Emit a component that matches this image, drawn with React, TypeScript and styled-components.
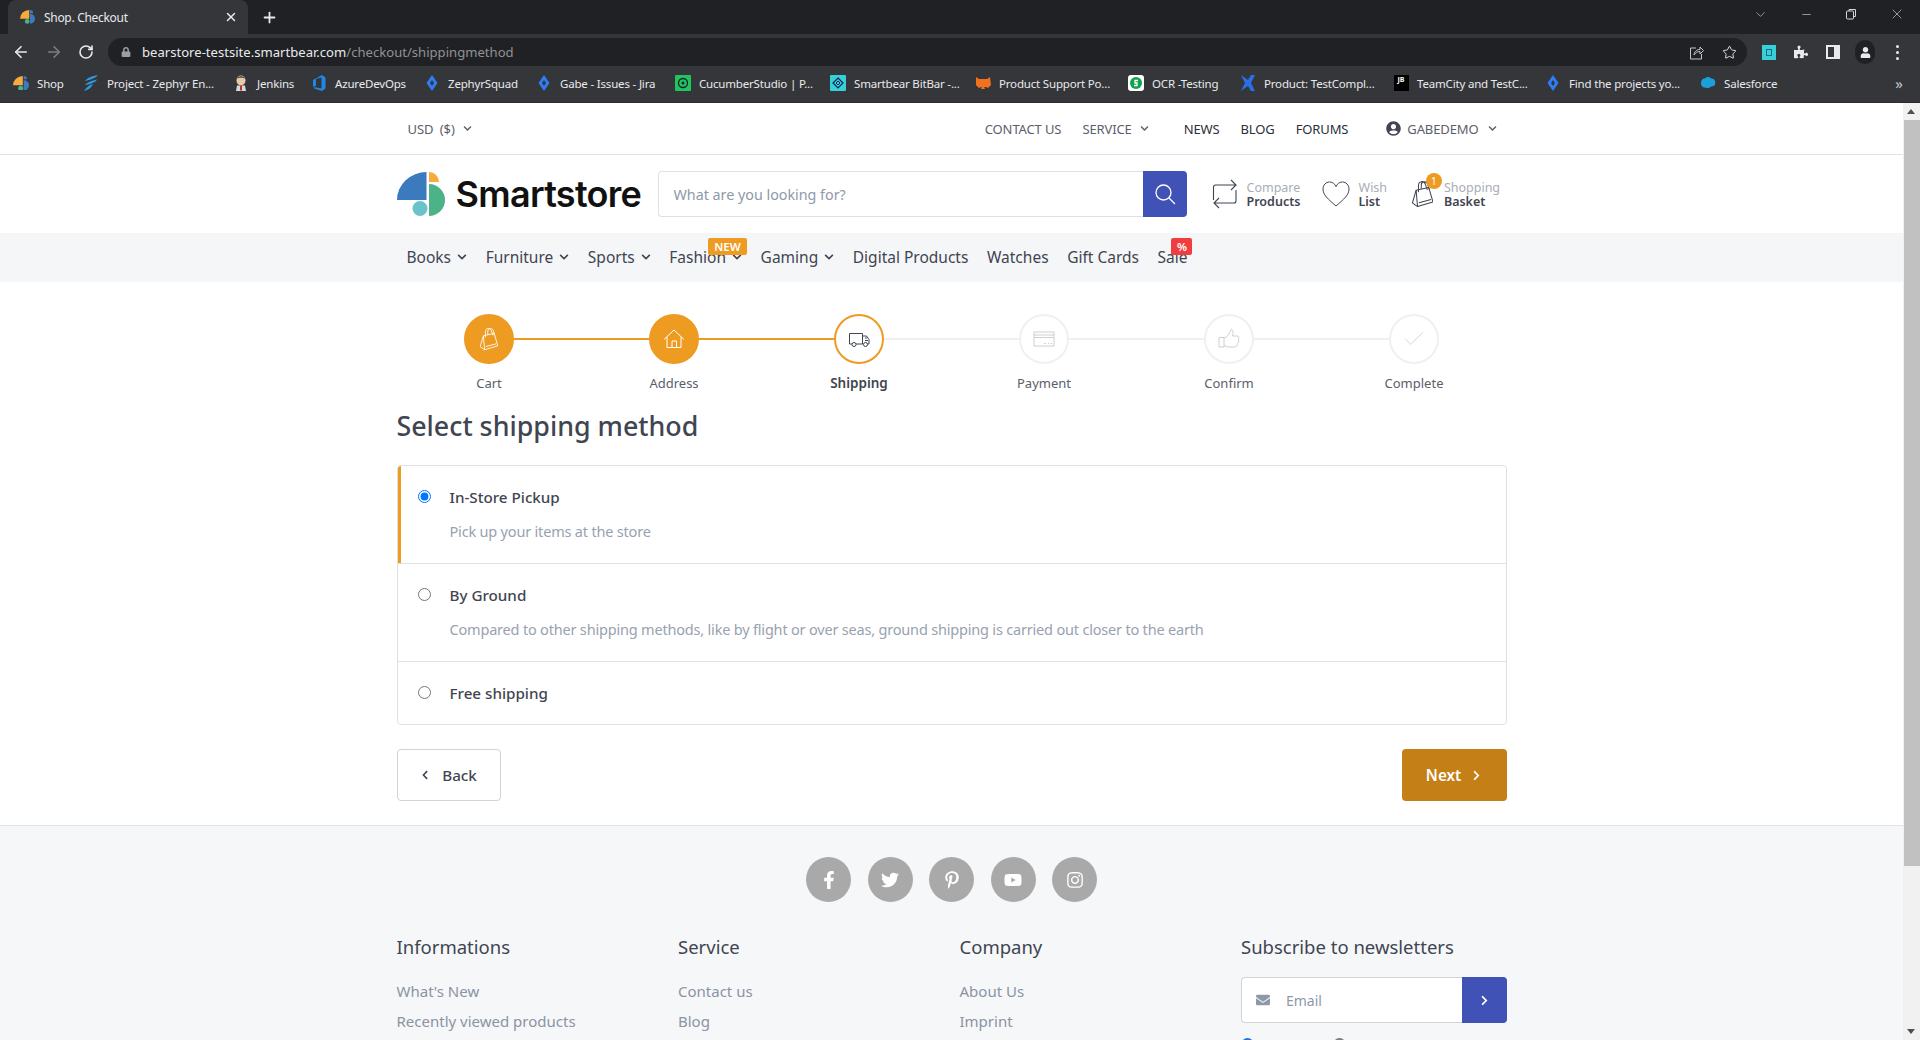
import React from 'react';
import styled, { createGlobalStyle } from 'styled-components';
import { ArrowLeft, ArrowRight, ChevronDown, Check, Minus, Plus, RotateCw, Star, X } from 'lucide-react';
import {
  FaChevronDown,
  FaChevronLeft,
  FaChevronRight,
  FaEnvelope,
  FaFacebookF,
  FaInstagram,
  FaLock,
  FaPinterestP,
  FaPuzzlePiece,
  FaTwitter,
  FaUser,
  FaUserCircle,
  FaYoutube
} from 'react-icons/fa';

const UI_FONT = `'Noto Sans', 'Open Sans', sans-serif`;
const ORANGE = '#ee9b22';
const INDIGO = '#4052b5';
const BORDER = '#dee2e6';

const GlobalStyle = createGlobalStyle`
  html, body {
    margin: 0;
    padding: 0;
    height: 1040px;
    overflow: hidden;
    background: #fff;
  }
  * {
    box-sizing: border-box;
  }
`;

type Palette = { big: string; small: string; half: string; dot: string };

const LOGO_COLORS: Palette = { big: '#3a7abd', small: '#f6ab3c', half: '#4cb388', dot: '#6ac3cb' };
const FAVICON_COLORS: Palette = { big: '#f6ab3c', small: '#3a7abd', half: '#3a7abd', dot: '#4cb388' };

const LogoMark: React.FC<{ size: number; colors: Palette }> = ({ size, colors }) => (
  <svg width={size} height={(size * 44) / 48} viewBox="0 0 48 44">
    <path d="M29.5 28H0A29.5 28 0 0 1 29.5 0Z" fill={colors.big} />
    <path d="M32 0A10 10 0 0 1 42 10H32Z" fill={colors.small} />
    <path d="M32 12A16 16 0 0 1 32 44Z" fill={colors.half} />
    <circle cx="23" cy="36.5" r="7.5" fill={colors.dot} />
  </svg>
);

const Diamond: React.FC = () => (
  <svg width="16" height="16" viewBox="0 0 16 16">
    <path d="M8 0l5.500 8L8 16 2.500 8z" fill="#2f7df6" />
    <path d="M8 5l2 3-2 3-2-3z" fill="#35363a" />
  </svg>
);

const BOOKMARK_ICONS: Record<string, React.ReactNode> = {
  shop: <LogoMark size={16} colors={FAVICON_COLORS} />,
  project: (
    <svg width="16" height="16" viewBox="0 0 16 16">
      <path d="M15 0C9 1 4 3 2 6c4-1 8-2 11-4zM14 4.500C9 5.500 4 7.500 2 10c4-.5 8-2 10.500-3.500zM10 9C6 10 3 13 1 16c4-1 7-3 9-7z" fill="#2e9ae6" />
    </svg>
  ),
  jenkins: (
    <svg width="16" height="16" viewBox="0 0 16 16">
      <ellipse cx="8" cy="5.500" rx="4.500" ry="5" fill="#e9c9a8" />
      <path d="M4 3.500C5 0 11 0 12 3.500 9 2.500 7 2.500 4 3.500z" fill="#555" />
      <path d="M4 10.500h8l1 5.500H3z" fill="#d9d9d9" />
      <path d="M7 10.500h2v5H7z" fill="#b33" />
    </svg>
  ),
  azure: (
    <svg width="16" height="16" viewBox="0 0 16 16">
      <path d="M11 0l3.500 2.500v11L11 16l-8-2.500V12l7.500 1.500V2.500L5 4v6.500L2 12V5z" fill="#1e88e5" />
    </svg>
  ),
  zephyr: <Diamond />,
  cucumber: (
    <svg width="16" height="16" viewBox="0 0 16 16">
      <rect width="16" height="16" rx="1" fill="#21c55d" />
      <circle cx="8" cy="8" r="4.500" fill="none" stroke="#123" strokeWidth="1.300" />
      <circle cx="8" cy="8" r="1.500" fill="#123" />
    </svg>
  ),
  bitbar: (
    <svg width="16" height="16" viewBox="0 0 16 16">
      <rect width="16" height="16" rx="1" fill="#35d0da" />
      <path d="M8 3l5 5-5 5-5-5z" fill="none" stroke="#125" strokeWidth="1.200" />
      <path d="M8 6l2 2-2 2-2-2z" fill="none" stroke="#125" />
    </svg>
  ),
  support: (
    <svg width="16" height="16" viewBox="0 0 16 16">
      <path d="M1 2l3 2h8l3-2 1 8-3 3-2-1H6l-2 1-3-3z" fill="#f2711c" />
      <path d="M8 9l-2 5h4z" fill="#f2711c" />
    </svg>
  ),
  ocr: (
    <svg width="16" height="16" viewBox="0 0 16 16">
      <rect width="16" height="16" rx="3" fill="#fff" />
      <circle cx="8" cy="8" r="6" fill="#12a150" />
      <path d="M10 5.500H7v2.500h2v2.500H6" fill="none" stroke="#fff" strokeWidth="1.300" />
    </svg>
  ),
  complete: (
    <svg width="16" height="16" viewBox="0 0 16 16">
      <path d="M1 0l7 5 3-5h4l-4 8 4 8h-4L8 11l-7 5 4-8z" fill="#2b6fe8" />
    </svg>
  ),
  salesforce: (
    <svg width="16" height="16" viewBox="0 0 16 16">
      <path d="M1 8c0-3 2-5 4-4.500 1-2 5-2 6 0 3 0 5 2 4 6-1 2-3 2-4 2-2 2-4 2-5 1-3 1-5-2-5-4.500z" fill="#1ba0d8" />
    </svg>
  )
};

const BOOKMARKS = [
  { label: 'Shop', icon: 'shop', width: 70 },
  { label: 'Project - Zephyr En...', icon: 'project', width: 150 },
  { label: 'Jenkins', icon: 'jenkins', width: 78 },
  { label: 'AzureDevOps', icon: 'azure', width: 113 },
  { label: 'ZephyrSquad', icon: 'zephyr', width: 112 },
  { label: 'Gabe - Issues - Jira', icon: 'zephyr', width: 139 },
  { label: 'CucumberStudio | P...', icon: 'cucumber', width: 155 },
  { label: 'Smartbear BitBar -...', icon: 'bitbar', width: 145 },
  { label: 'Product Support Po...', icon: 'support', width: 153 },
  { label: 'OCR -Testing', icon: 'ocr', width: 112 },
  { label: 'Product: TestCompl...', icon: 'complete', width: 153 },
  { label: 'TeamCity and TestC...', icon: 'jb', width: 152 },
  { label: 'Find the projects yo...', icon: 'zephyr', width: 155 },
  { label: 'Salesforce', icon: 'salesforce', width: 100 }
];

const NAV_ITEMS = [
  { label: 'Books', menu: true },
  { label: 'Furniture', menu: true },
  { label: 'Sports', menu: true },
  { label: 'Fashion', menu: true, badge: 'NEW' },
  { label: 'Gaming', menu: true },
  { label: 'Digital Products' },
  { label: 'Watches' },
  { label: 'Gift Cards' },
  { label: 'Sale', badge: '%' }
];

const BagIcon: React.FC<{ height?: number }> = ({ height = 28 }) => (
  <svg width={(height * 24) / 30} height={height} viewBox="0 0 24 30" fill="none" stroke="currentColor" strokeWidth="1.100">
    <path d="M5.500 11L19 8l4.500 15.500L7 28.500z" strokeLinejoin="round" />
    <path d="M5.500 11L1.500 24.500 7 28.500" strokeLinejoin="round" />
    <path d="M8.500 24.500L21.500 21" />
    <path d="M8 13V6c0-5 6-6 7.500-1l2 5.500M11 9.500V5c.5-4 6-4 7 0l1.500 5" />
  </svg>
);

const STEP_ICONS: Record<string, React.ReactNode> = {
  Cart: <BagIcon height={24} />,
  Address: (
    <svg width="22" height="22" viewBox="0 0 22 22" fill="none" stroke="currentColor" strokeWidth="1">
      <path d="M1 11.500L11 2l10 9.500M4 9v10.500h14V9M9 19.500V13h4.500v6.500" />
    </svg>
  ),
  Shipping: (
    <svg width="22" height="18" viewBox="0 0 22 18" fill="none" stroke="currentColor" strokeWidth="1">
      <path d="M4 14H1.500V3.500h13V14H8M14.500 6h4l2.500 3.500V14h-1.500M14.500 14H15" />
      <circle cx="6" cy="14.500" r="2" />
      <circle cx="17.500" cy="14.500" r="2" />
      <path d="M17 8h2M17 10.500h3" />
    </svg>
  ),
  Payment: (
    <svg width="22" height="16" viewBox="0 0 22 16" fill="none" stroke="currentColor" strokeWidth="1">
      <rect x="1" y="1" width="20" height="14" />
      <path d="M1 4h20M1 6.500h20M11 12.500h2M15 12.500h1M17.500 12.500h1.500" />
    </svg>
  ),
  Confirm: (
    <svg width="22" height="22" viewBox="0 0 22 22" fill="none" stroke="currentColor" strokeWidth="1">
      <path d="M1 9.500h5V19H1zM6 10c3-1 6-4 7-8.500 2 0 2.500 2.500 1.500 6.500h4.500c2 0 2.500 2 1.500 3.500.5 2 0 3-1 4 0 2-1 3-2.500 3.500H9.500L6 17.500" strokeLinejoin="round" />
    </svg>
  ),
  Complete: <Check size={26} strokeWidth={0.8} />
};

const STEPS = [
  { label: 'Cart', state: 'done' },
  { label: 'Address', state: 'done' },
  { label: 'Shipping', state: 'active' },
  { label: 'Payment', state: 'todo' },
  { label: 'Confirm', state: 'todo' },
  { label: 'Complete', state: 'todo' }
];

const METHODS = [
  { name: 'In-Store Pickup', description: 'Pick up your items at the store', checked: true },
  {
    name: 'By Ground',
    description:
      'Compared to other shipping methods, like by flight or over seas, ground shipping is carried out closer to the earth'
  },
  { name: 'Free shipping' }
];

const FOOTER_COLUMNS = [
  { title: 'Informations', links: ["What's New", 'Recently viewed products'] },
  { title: 'Service', links: ['Contact us', 'Blog'] },
  { title: 'Company', links: ['About Us', 'Imprint'] }
];

const SOCIALS = [<FaFacebookF />, <FaTwitter />, <FaPinterestP />, <FaYoutube />, <FaInstagram />];

const App: React.FC = () => {
  return (
    <>
      <GlobalStyle />
      <Browser>
        <TabStrip>
          <Tab>
            <LogoMark size={15} colors={FAVICON_COLORS} />
            <TabTitle>Shop. Checkout</TabTitle>
            <X size={14} color="#e8eaed" strokeWidth={2.5} />
          </Tab>
          <NewTab>
            <Plus size={17} strokeWidth={2.5} />
          </NewTab>
          <WindowControls>
            <ChevronDown size={15} strokeWidth={1} />
            <Minus size={13} strokeWidth={1.2} />
            <RestoreIcon />
            <X size={16} strokeWidth={1} />
          </WindowControls>
        </TabStrip>
        <Toolbar>
          <NavButtons>
            <ArrowLeft size={18} color="#e8eaed" strokeWidth={2.2} />
            <ArrowRight size={18} color="#7c7e82" strokeWidth={2.2} />
            <RotateCw size={16} color="#e8eaed" strokeWidth={2.4} />
          </NavButtons>
          <AddressBar>
            <FaLock size={10} color="#9aa0a6" />
            <Url>
              bearstore-testsite.smartbear.com<UrlPath>/checkout/shippingmethod</UrlPath>
            </Url>
            <AddressActions>
              <ShareIcon />
              <Star size={15} strokeWidth={1.5} />
            </AddressActions>
          </AddressBar>
          <Extensions>
            <ExtensionTile />
            <FaPuzzlePiece size={14} color="#e8eaed" />
            <PanelIcon />
            <Avatar>
              <FaUser size={11} />
            </Avatar>
            <Kebab>
              <i />
              <i />
              <i />
            </Kebab>
          </Extensions>
        </Toolbar>
        <Bookmarks>
          {BOOKMARKS.map((item) => (
            <Bookmark key={item.label} $width={item.width}>
              <BookmarkGlyph>{item.icon === 'jb' ? <JbTile>JB</JbTile> : BOOKMARK_ICONS[item.icon]}</BookmarkGlyph>
              <span>{item.label}</span>
            </Bookmark>
          ))}
          <MoreBookmarks>»</MoreBookmarks>
        </Bookmarks>
      </Browser>

      <Viewport>
        <Page>
          <TopBar>
            <Container>
              <TopRow>
                <TopLink>
                  USD&nbsp;&nbsp;($)
                  <FaChevronDown size={9} />
                </TopLink>
                <TopRight>
                  <TopLink>CONTACT US</TopLink>
                  <TopLink>
                    SERVICE
                    <FaChevronDown size={9} />
                  </TopLink>
                  <StrongLinks>
                    <TopLink $dark>NEWS</TopLink>
                    <TopLink $dark>BLOG</TopLink>
                    <TopLink $dark>FORUMS</TopLink>
                  </StrongLinks>
                  <TopLink>
                    <FaUserCircle size={15} color="#3f4551" />
                    <UserName>GABEDEMO</UserName>
                    <FaChevronDown size={9} />
                  </TopLink>
                </TopRight>
              </TopRow>
            </Container>
          </TopBar>

          <Container>
            <Header>
              <Logo>
                <LogoMark size={48} colors={LOGO_COLORS} />
                <LogoText>Smartstore</LogoText>
              </Logo>
              <Search>
                <SearchInput placeholder="What are you looking for?" />
                <SearchButton>
                  <svg width="22" height="22" viewBox="0 0 22 22" fill="none" stroke="#fff" strokeWidth="1.300">
                    <circle cx="9.500" cy="9.500" r="7.500" />
                    <path d="M15 15l6 6" />
                  </svg>
                </SearchButton>
              </Search>
              <Tools>
                <Tool $width={110}>
                  <svg width="26" height="30" viewBox="0 0 26 30" fill="none" stroke="#3f4551" strokeWidth="1.100">
                    <path d="M1.500 21V8a2 2 0 0 1 2-2H24M19 1l5 5-5 5M24 11v11a2 2 0 0 1-2 2H2M7 19l-5 5 5 5" />
                  </svg>
                  <ToolText>
                    <small>Compare</small>
                    <b>Products</b>
                  </ToolText>
                </Tool>
                <Tool $width={89}>
                  <svg width="28" height="26" viewBox="0 0 28 26" fill="none" stroke="#3f4551" strokeWidth="1">
                    <path d="M14 25C6 18 1 14 1 8c0-4 3-7 6.500-7 3 0 5 1.500 6.500 4.500C15.500 2.500 17.500 1 20.500 1 24 1 27 4 27 8c0 6-5 10-13 17z" />
                  </svg>
                  <ToolText>
                    <small>Wish</small>
                    <b>List</b>
                  </ToolText>
                </Tool>
                <Tool>
                  <BagWrap>
                    <BagIcon />
                    <CartCount>1</CartCount>
                  </BagWrap>
                  <ToolText>
                    <small>Shopping</small>
                    <b>Basket</b>
                  </ToolText>
                </Tool>
              </Tools>
            </Header>
          </Container>

          <MainNav>
            <Container>
              <NavRow>
                {NAV_ITEMS.map((item) => (
                  <NavItem key={item.label}>
                    {item.label}
                    {item.menu && <FaChevronDown size={10} />}
                    {item.badge && <NavBadge $sale={item.badge === '%'}>{item.badge}</NavBadge>}
                  </NavItem>
                ))}
              </NavRow>
            </Container>
          </MainNav>

          <Container>
            <Steps>
              {STEPS.map((step, index) => (
                <Step key={step.label}>
                  <Track>
                    <Line $hidden={index === 0} $lit={step.state !== 'todo'} />
                    <Circle $state={step.state}>{STEP_ICONS[step.label]}</Circle>
                    <Line $hidden={index === STEPS.length - 1} $lit={step.state === 'done'} />
                  </Track>
                  <StepLabel $active={step.state === 'active'}>{step.label}</StepLabel>
                </Step>
              ))}
            </Steps>

            <Title>Select shipping method</Title>

            <MethodList>
              {METHODS.map((method) => (
                <Method key={method.name} $selected={!!method.checked}>
                  <Radio type="radio" name="shipping" defaultChecked={method.checked} />
                  <div>
                    <MethodName>{method.name}</MethodName>
                    {method.description && <MethodDescription>{method.description}</MethodDescription>}
                  </div>
                </Method>
              ))}
            </MethodList>

            <Actions>
              <BackButton>
                <FaChevronLeft size={10} />
                Back
              </BackButton>
              <NextButton>
                Next
                <FaChevronRight size={11} />
              </NextButton>
            </Actions>
          </Container>

          <Footer>
            <Container>
              <SocialRow>
                {SOCIALS.map((icon, index) => (
                  <SocialLink key={index}>{icon}</SocialLink>
                ))}
              </SocialRow>
              <FooterGrid>
                {FOOTER_COLUMNS.map((column) => (
                  <div key={column.title}>
                    <FooterTitle>{column.title}</FooterTitle>
                    {column.links.map((link) => (
                      <FooterLink key={link}>{link}</FooterLink>
                    ))}
                  </div>
                ))}
                <NewsletterColumn>
                  <FooterTitle>Subscribe to newsletters</FooterTitle>
                  <Newsletter>
                    <EmailField>
                      <FaEnvelope size={14} color="#8e99a8" />
                      <EmailInput placeholder="Email" />
                    </EmailField>
                    <SubscribeButton>
                      <FaChevronRight size={11} />
                    </SubscribeButton>
                  </Newsletter>
                  <ConsentRow>
                    <ConsentDot $color="#1f75e0" />
                    <ConsentDot $color="#7a7f87" />
                  </ConsentRow>
                </NewsletterColumn>
              </FooterGrid>
            </Container>
          </Footer>
        </Page>
        <Scrollbar>
          <ScrollArrow $up />
          <ScrollTrack>
            <ScrollThumb />
          </ScrollTrack>
          <ScrollArrow />
        </Scrollbar>
      </Viewport>
    </>
  );
};

export default App;

const RestoreIcon: React.FC = () => (
  <svg width="12" height="12" viewBox="0 0 12 12" fill="none" stroke="#d5d6d8" strokeWidth="1">
    <rect x="1.500" y="3" width="7" height="8" rx="1" />
    <path d="M4 3V1.500h6.500V8.500H8.500" />
  </svg>
);

const ShareIcon: React.FC = () => (
  <svg width="15" height="15" viewBox="0 0 15 15" fill="none" stroke="#c5c7ca" strokeWidth="1">
    <path d="M7 3H1.500v11h11V9" />
    <path d="M5 10c.5-4 3-5.500 6-5.500V2l3.500 3.500L11 9V6.500C8.500 6.500 6.500 7.500 5 10z" />
  </svg>
);

const PanelIcon: React.FC = () => (
  <svg width="14" height="14" viewBox="0 0 14 14">
    <path d="M0 0h14v14H0zM2 2v10h6V2z" fill="#e8eaed" fillRule="evenodd" />
  </svg>
);

const Browser = styled.div`
  height: 103px;
  background: #35363a;
  font-family: ${UI_FONT};
  color: #e8eaed;
  border-bottom: 1px solid #2a2b2e;
`;

const TabStrip = styled.div`
  height: 34px;
  background: #202124;
  display: flex;
  align-items: flex-end;
  padding-left: 8px;
`;

const Tab = styled.div`
  width: 240px;
  height: 34px;
  background: #35363a;
  border-radius: 8px 8px 0 0;
  display: flex;
  align-items: center;
  padding: 0 10px 0 12px;
  gap: 9px;
`;

const TabTitle = styled.span`
  flex: 1;
  font-size: 12px;
  letter-spacing: -0.3px;
`;

const NewTab = styled.div`
  width: 42px;
  height: 34px;
  display: flex;
  align-items: center;
  justify-content: center;
`;

const WindowControls = styled.div`
  margin-left: auto;
  height: 34px;
  display: flex;
  align-items: center;
  gap: 32px;
  padding: 0 15px 6px 0;
  color: #d5d6d8;
`;

const Toolbar = styled.div`
  height: 32px;
  display: flex;
  align-items: center;
  padding: 4px 0 0 12px;
`;

const NavButtons = styled.div`
  width: 96px;
  display: flex;
  align-items: center;
  gap: 15px;
`;

const AddressBar = styled.div`
  width: 1639px;
  height: 28px;
  background: #202124;
  border-radius: 14px;
  display: flex;
  align-items: center;
  padding: 0 10px 0 13px;
  gap: 11px;
`;

const Url = styled.div`
  font-size: 13.100px;
  color: #e8eaed;
`;

const UrlPath = styled.span`
  color: #8f9296;
`;

const AddressActions = styled.div`
  margin-left: auto;
  display: flex;
  align-items: center;
  gap: 18px;
`;

const Extensions = styled.div`
  flex: 1;
  display: flex;
  align-items: center;
  gap: 18px;
  padding-left: 15px;
`;

const ExtensionTile = styled.div`
  width: 14px;
  height: 15px;
  background: #35d0da;
  border: 3px solid #35d0da;
  outline: 1px solid #1b6d7a;
  outline-offset: -5px;
`;

const Avatar = styled.div`
  width: 20px;
  height: 24px;
  border-radius: 10px;
  background: #202124;
  color: #e8eaed;
  display: flex;
  align-items: center;
  justify-content: center;
  margin: 0 -3px;
`;

const Kebab = styled.div`
  display: flex;
  flex-direction: column;
  gap: 3px;
  margin-left: 6px;

  i {
    width: 3px;
    height: 3px;
    border-radius: 50%;
    background: #e8eaed;
  }
`;

const Bookmarks = styled.div`
  height: 36px;
  display: flex;
  align-items: center;
  padding: 0 0 2px 13px;
`;

const Bookmark = styled.div<{ $width: number }>`
  width: ${(p) => p.$width}px;
  display: flex;
  align-items: center;
  gap: 8px;
  font-size: 11.500px;
  letter-spacing: -0.18px;
  white-space: nowrap;
  overflow: hidden;
`;

const BookmarkGlyph = styled.span`
  width: 16px;
  height: 16px;
  flex: none;
  display: flex;
  align-items: center;
  justify-content: center;
`;

const JbTile = styled.span`
  width: 15px;
  height: 16px;
  background: #000;
  color: #fff;
  font-size: 7px;
  font-weight: 700;
  line-height: 10px;
  text-align: center;
  letter-spacing: 0;
`;

const MoreBookmarks = styled.span`
  margin-left: auto;
  padding-right: 17px;
  font-size: 15px;
  color: #c5c7ca;
`;

const Viewport = styled.div`
  height: 937px;
  display: flex;
  overflow: hidden;
  font-family: ${UI_FONT};
  color: #3f4551;
`;

const Page = styled.div`
  flex: 1;
  min-width: 0;
  overflow: hidden;
`;

const Scrollbar = styled.div`
  width: 17px;
  background: #f1f1f1;
  display: flex;
  flex-direction: column;
`;

const ScrollArrow = styled.div<{ $up?: boolean }>`
  height: 17px;
  flex: none;
  position: relative;

  &::after {
    content: '';
    position: absolute;
    left: 4px;
    top: 6px;
    border-left: 4.5px solid transparent;
    border-right: 4.5px solid transparent;
    ${(p) => (p.$up ? 'border-bottom: 5px solid #505050;' : 'border-top: 5px solid #505050;')}
  }
`;

const ScrollTrack = styled.div`
  flex: 1;
`;

const ScrollThumb = styled.div`
  height: 746px;
  background: #c1c1c1;
  margin-left: 1px;
`;

const Container = styled.div`
  width: 1110px;
  margin: 0 auto;
`;

const TopBar = styled.div`
  height: 52px;
  border-bottom: 1px solid ${BORDER};
`;

const TopRow = styled.div`
  height: 51px;
  display: flex;
  align-items: center;
  justify-content: space-between;
  padding: 0 10px 0 11px;
`;

const TopRight = styled.div`
  display: flex;
  align-items: center;
  gap: 21px;
`;

const StrongLinks = styled.div`
  display: flex;
  align-items: center;
  gap: 21px;
  margin: 0 17px 0 14px;
`;

const TopLink = styled.span<{ $dark?: boolean }>`
  display: inline-flex;
  align-items: center;
  gap: 8px;
  font-size: 13px;
  letter-spacing: -0.12px;
  color: ${(p) => (p.$dark ? '#2b303a' : '#5a606b')};
`;

const UserName = styled.span`
  margin: 0 1px 0 -2px;
`;

const Header = styled.div`
  height: 78px;
  display: flex;
  align-items: center;
`;

const Logo = styled.div`
  width: 261px;
  flex: none;
  display: flex;
  align-items: center;
  gap: 11px;
`;

const LogoText = styled.span`
  font-family: Inter, 'Noto Sans', sans-serif;
  font-size: 36px;
  font-weight: 600;
  letter-spacing: -0.7px;
  color: #111;
  line-height: 1;
`;

const Search = styled.div`
  width: 529px;
  height: 46px;
  display: flex;
`;

const SearchInput = styled.input`
  flex: 1;
  min-width: 0;
  border: 1px solid ${BORDER};
  border-right: 0;
  border-radius: 4px 0 0 4px;
  padding: 0 15px;
  font-family: ${UI_FONT};
  font-size: 14.300px;
  outline: none;

  &::placeholder {
    color: #8e99a8;
    opacity: 1;
  }
`;

const SearchButton = styled.button`
  width: 44px;
  border: 0;
  border-radius: 0 4px 4px 0;
  background: ${INDIGO};
  display: flex;
  align-items: center;
  justify-content: center;
  padding: 0;
`;

const Tools = styled.div`
  display: flex;
  align-items: center;
  padding-left: 25px;
`;

const Tool = styled.div<{ $width?: number }>`
  ${(p) => p.$width && `width: ${p.$width}px;`}
  display: flex;
  align-items: center;
  gap: 9px;
  color: #3f4551;
`;

const ToolText = styled.div`
  display: flex;
  flex-direction: column;
  font-size: 12.500px;
  line-height: 14px;
  padding-top: 2px;

  small {
    font-size: 12.500px;
    color: #a8adb5;
  }

  b {
    font-weight: 600;
    color: #3f4551;
  }
`;

const BagWrap = styled.div`
  position: relative;
  display: flex;
  margin-right: 2px;
`;

const CartCount = styled.span`
  position: absolute;
  top: -7px;
  right: -9px;
  width: 16px;
  height: 16px;
  border-radius: 50%;
  background: ${ORANGE};
  color: #fff;
  font-size: 10px;
  line-height: 16px;
  text-align: center;
`;

const MainNav = styled.div`
  height: 49px;
  background: #f5f6f8;
`;

const NavRow = styled.div`
  height: 49px;
  display: flex;
  align-items: center;
  padding: 0 0 2px 10px;
  gap: 18.600px;
`;

const NavItem = styled.span`
  position: relative;
  display: inline-flex;
  align-items: center;
  gap: 6px;
  font-size: 15.500px;
  color: #3f4551;
`;

const NavBadge = styled.span<{ $sale: boolean }>`
  position: absolute;
  top: -8px;
  right: -5px;
  height: 17px;
  width: ${(p) => (p.$sale ? '21px' : '39px')};
  border-radius: 2px;
  background: ${(p) => (p.$sale ? '#f03e3e' : ORANGE)};
  color: #fff;
  font-size: 11.500px;
  font-weight: 600;
  line-height: 17px;
  text-align: center;
`;

const Steps = styled.div`
  display: grid;
  grid-template-columns: repeat(6, 1fr);
  padding-top: 32px;
`;

const Step = styled.div`
  display: flex;
  flex-direction: column;
  align-items: center;
`;

const Track = styled.div`
  width: 100%;
  display: flex;
  align-items: center;
`;

const Line = styled.div<{ $hidden: boolean; $lit: boolean }>`
  flex: 1;
  height: 2px;
  background: ${(p) => (p.$hidden ? 'transparent' : p.$lit ? ORANGE : '#f0f0f1')};
`;

const Circle = styled.div<{ $state: string }>`
  width: 50px;
  height: 50px;
  border-radius: 50%;
  flex: none;
  display: flex;
  align-items: center;
  justify-content: center;
  border: 2px solid ${(p) => (p.$state === 'todo' ? '#f0f0f1' : ORANGE)};
  background: ${(p) => (p.$state === 'done' ? ORANGE : '#fff')};
  color: ${(p) => (p.$state === 'done' ? '#fff' : p.$state === 'active' ? '#3f4551' : '#cfcfcf')};
`;

const StepLabel = styled.div<{ $active: boolean }>`
  margin-top: 9px;
  font-size: ${(p) => (p.$active ? '13.500px' : '13px')};
  line-height: 20px;
  font-weight: ${(p) => (p.$active ? 600 : 400)};
  color: ${(p) => (p.$active ? '#3f4551' : '#5a606b')};
`;

const Title = styled.h1`
  margin: 16px 0 22px;
  font-size: 26.800px;
  line-height: 34px;
  font-weight: 500;
  color: #3f4551;
`;

const MethodList = styled.div`
  border: 1px solid ${BORDER};
  border-radius: 4px;
  overflow: hidden;
`;

const Method = styled.label<{ $selected: boolean }>`
  display: flex;
  gap: 19px;
  padding: 20px 20px 19px ${(p) => (p.$selected ? '17px' : '20px')};
  border-left: ${(p) => (p.$selected ? `3px solid ${ORANGE}` : '0')};

  & + & {
    border-top: 1px solid ${BORDER};
  }

  &:last-child {
    padding-bottom: 20px;
  }
`;

const Radio = styled.input`
  margin: 4px 0 0;
  width: 13px;
  height: 13px;
  flex: none;
`;

const MethodName = styled.div`
  font-size: 15.200px;
  line-height: 22px;
  font-weight: 500;
  color: #3f4551;
`;

const MethodDescription = styled.div`
  margin: 12px 0 2px;
  font-size: 14.500px;
  letter-spacing: -0.19px;
  line-height: 22px;
  color: #98a2b0;
`;

const Actions = styled.div`
  display: flex;
  justify-content: space-between;
  padding: 24px 0;
`;

const BackButton = styled.button`
  width: 104px;
  height: 52px;
  border: 1px solid #cfd4da;
  border-radius: 4px;
  background: #fff;
  color: #3f4551;
  font-family: ${UI_FONT};
  font-size: 15.200px;
  font-weight: 500;
  display: flex;
  align-items: center;
  justify-content: center;
  gap: 12px;
`;

const NextButton = styled.button`
  width: 105px;
  height: 52px;
  border: 0;
  border-radius: 4px;
  background: #c57f17;
  color: #fff;
  font-family: ${UI_FONT};
  font-size: 15.200px;
  font-weight: 600;
  display: flex;
  align-items: center;
  justify-content: center;
  gap: 10px;
`;

const Footer = styled.footer`
  height: 300px;
  background: #f6f7f9;
  border-top: 1px solid ${BORDER};
`;

const SocialRow = styled.div`
  display: flex;
  justify-content: center;
  gap: 16.500px;
  padding-top: 31px;
`;

const SocialLink = styled.a`
  width: 45px;
  height: 45px;
  border-radius: 50%;
  background: #a9a9a9;
  color: #fff;
  font-size: 18px;
  display: flex;
  align-items: center;
  justify-content: center;
`;

const FooterGrid = styled.div`
  display: grid;
  grid-template-columns: 281.500px 281.500px 281.500px 1fr;
  padding-top: 32px;
`;

const FooterTitle = styled.div`
  font-size: 18.500px;
  line-height: 26px;
  color: #3f4551;
  margin-bottom: 17px;
`;

const FooterLink = styled.div`
  font-size: 15px;
  line-height: 29.500px;
  color: #8a94a3;
`;

const NewsletterColumn = styled.div`
  min-width: 0;
`;

const Newsletter = styled.div`
  height: 46px;
  display: flex;
`;

const EmailField = styled.div`
  flex: 1;
  min-width: 0;
  background: #fff;
  border: 1px solid #cfd4da;
  border-right: 0;
  border-radius: 4px 0 0 4px;
  display: flex;
  align-items: center;
  gap: 14px;
  padding-left: 14px;
`;

const EmailInput = styled.input`
  flex: 1;
  min-width: 0;
  border: 0;
  outline: none;
  background: transparent;
  font-family: ${UI_FONT};
  font-size: 14px;

  &::placeholder {
    color: #8e99a8;
    opacity: 1;
  }
`;

const SubscribeButton = styled.button`
  width: 45px;
  border: 0;
  border-radius: 0 4px 4px 0;
  background: ${INDIGO};
  color: #fff;
  display: flex;
  align-items: center;
  justify-content: center;
  padding: 0;
`;

const ConsentRow = styled.div`
  display: flex;
  gap: 79px;
  padding-top: 15px;
`;

const ConsentDot = styled.span<{ $color: string }>`
  width: 13px;
  height: 13px;
  border-radius: 50%;
  background: ${(p) => p.$color};
`;
